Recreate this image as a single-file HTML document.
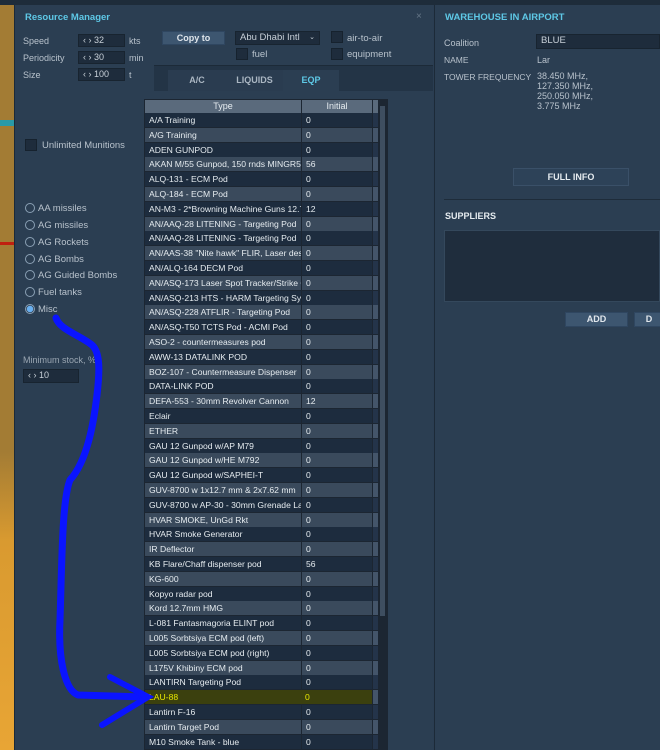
<!DOCTYPE html>
<html><head><meta charset="utf-8"><style>
*{margin:0;padding:0;box-sizing:border-box}
body{width:660px;height:750px;overflow:hidden;background:#2a3d52;font-family:"Liberation Sans","DejaVu Sans",sans-serif;font-size:9px;color:#c8d0d8;position:relative}
.abs{position:absolute}
.map{left:0;top:5px;width:14px;height:745px;background:linear-gradient(#a37c34 0,#a37c34 60%,#d99a30 72%,#e8a535 100%)}
.lp{left:14px;top:5px;width:419px;height:745px;background:#2b3e52;border-left:1px solid #1c2a38}
.rp{left:434px;top:5px;width:226px;height:745px;background:#2b3e52;border-left:1px solid #1c2a38}
.title{color:#5ec8e6;font-weight:bold;font-size:9.5px}
.lbl{color:#b8c2cc;font-size:9px}
.inp{background:#1e2c3c;border:1px solid #182430;color:#c8d0d8;font-size:9px;height:13px;line-height:11px;padding-left:4px}
.btn{background:#3d5670;border:1px solid #2f4660;color:#e0e6ec;font-weight:bold;text-align:center}
.cb{width:12px;height:12px;background:#1e2c3c;border:1px solid #16222e}
.rad{width:10px;height:10px;border-radius:50%;border:1px solid #8aa0b4}
.row{position:absolute;left:145px;width:233px;height:14.8px;font-size:8.6px;line-height:14.8px;color:#e6ecf0}
.row .t{position:absolute;left:0;width:156px;height:14px;padding-left:4px;white-space:nowrap;overflow:hidden}
.row .v{position:absolute;left:157px;width:70px;height:14px;padding-left:4px}
.row .e{position:absolute;left:228px;width:5px;height:14px}
.d .t,.d .v{background:#1d2c3e}.d .e{background:#24344a}
.l .t,.l .v{background:#3a4a5c}.l .e{background:#44556a}
</style></head><body>
<div class="abs" style="left:0;top:0;width:660px;height:5px;background:#1e2c3a"></div>
<div class="abs map"></div>
<div class="abs" style="left:0;top:120px;width:14px;height:6px;background:#2a9aa8"></div>
<div class="abs" style="left:0;top:242px;width:14px;height:3px;background:#c02010"></div>
<div class="abs lp"></div>
<div class="abs rp"></div>
<div class="abs title" style="left:25px;top:12px">Resource Manager</div>
<div class="abs" style="left:416px;top:11px;color:#667788;font-size:10px">×</div>
<div class="abs lbl" style="left:23px;top:36px">Speed</div>
<div class="abs lbl" style="left:23px;top:53px">Periodicity</div>
<div class="abs lbl" style="left:23px;top:70px">Size</div>
<div class="abs inp" style="left:78px;top:34px;width:47px">‹ › 32</div>
<div class="abs inp" style="left:78px;top:51px;width:47px">‹ › 30</div>
<div class="abs inp" style="left:78px;top:68px;width:47px">‹ › 100</div>
<div class="abs lbl" style="left:129px;top:36px">kts</div>
<div class="abs lbl" style="left:129px;top:53px">min</div>
<div class="abs lbl" style="left:129px;top:70px">t</div>
<div class="abs btn" style="left:162px;top:31px;width:63px;height:14px;line-height:12px">Copy to</div>
<div class="abs inp" style="left:235px;top:31px;width:85px;height:14px;font-size:9.5px">Abu Dhabi Intl <span style="position:absolute;right:4px;font-size:7px">⌄</span></div>
<div class="abs cb" style="left:331px;top:31px"></div><div class="abs lbl" style="left:347px;top:33px;font-size:9.5px">air-to-air</div>
<div class="abs cb" style="left:236px;top:48px"></div><div class="abs lbl" style="left:252px;top:49px;font-size:9.5px">fuel</div>
<div class="abs cb" style="left:331px;top:48px"></div><div class="abs lbl" style="left:347px;top:49px;font-size:9.5px">equipment</div>
<div class="abs" style="left:154px;top:65px;width:279px;height:26px;background:#233446;border-top:1px solid #1c2a38"></div>
<div class="abs" style="left:168px;top:70px;width:58px;height:21px;background:#2a3c50;color:#aab6c2;font-weight:bold;text-align:center;line-height:21px">A/C</div>
<div class="abs" style="left:226px;top:70px;width:57px;height:21px;background:#2a3c50;color:#aab6c2;font-weight:bold;text-align:center;line-height:21px">LIQUIDS</div>
<div class="abs" style="left:283px;top:70px;width:56px;height:22px;background:#2b3e52;color:#5ec8e6;font-weight:bold;text-align:center;line-height:21px">EQP</div>
<div class="abs cb" style="left:25px;top:139px"></div><div class="abs lbl" style="left:42px;top:140px;font-size:9.5px">Unlimited Munitions</div>
<div class="abs rad" style="left:25px;top:203px"></div><div class="abs lbl" style="left:38px;top:203px;font-size:9.5px">AA missiles</div>
<div class="abs rad" style="left:25px;top:220px"></div><div class="abs lbl" style="left:38px;top:220px;font-size:9.5px">AG missiles</div>
<div class="abs rad" style="left:25px;top:237px"></div><div class="abs lbl" style="left:38px;top:237px;font-size:9.5px">AG Rockets</div>
<div class="abs rad" style="left:25px;top:254px"></div><div class="abs lbl" style="left:38px;top:254px;font-size:9.5px">AG Bombs</div>
<div class="abs rad" style="left:25px;top:270px"></div><div class="abs lbl" style="left:38px;top:270px;font-size:9.5px">AG Guided Bombs</div>
<div class="abs rad" style="left:25px;top:287px"></div><div class="abs lbl" style="left:38px;top:287px;font-size:9.5px">Fuel tanks</div>
<div class="abs rad" style="left:25px;top:304px;background:radial-gradient(#6ab0f0 0 3px,transparent 3.5px)"></div><div class="abs lbl" style="left:38px;top:304px;font-size:9.5px">Misc</div>
<div class="abs lbl" style="left:23px;top:355px;color:#9aa6b2">Minimum stock, %</div>
<div class="abs inp" style="left:23px;top:369px;width:56px;height:14px">‹ › 10</div>
<div class="abs" style="left:144px;top:99px;width:244px;height:651px;background:#1c2632"></div>
<div class="abs" style="left:145px;top:100px;width:156px;height:13px;background:#5a6a7c;color:#e6ecf0;text-align:center;line-height:13px">Type</div>
<div class="abs" style="left:302px;top:100px;width:70px;height:13px;background:#5a6a7c;color:#e6ecf0;text-align:center;line-height:13px">Initial</div>
<div class="abs" style="left:373px;top:100px;width:5px;height:13px;background:#5a6a7c"></div>
<div class="abs" style="left:380px;top:106px;width:5px;height:510px;background:#3e4e60"></div>
<div id="rows"></div>
<svg class="abs" style="left:0;top:0" width="660" height="750">
<path d="M56,318 C60,330 80,335 92,345 C100,352 100,370 97,395 C94,420 88,460 70,480 C62,500 62,560 60,620 C58,660 65,690 78,695 L145,697" fill="none" stroke="#0a14ff" stroke-width="7" stroke-linecap="round" stroke-linejoin="round"/>
<path d="M110,677 L148,697 L102,725" fill="none" stroke="#0a14ff" stroke-width="6" stroke-linecap="round"/>
</svg>
<div class="abs title" style="left:445px;top:12px">WAREHOUSE IN AIRPORT</div>
<div class="abs lbl" style="left:444px;top:38px">Coalition</div>
<div class="abs inp" style="left:536px;top:34px;width:124px;height:15px;font-size:9.5px">BLUE</div>
<div class="abs lbl" style="left:444px;top:55px;font-size:8.5px">NAME</div>
<div class="abs lbl" style="left:537px;top:55px">Lar</div>
<div class="abs lbl" style="left:444px;top:72px;font-size:8.5px">TOWER FREQUENCY</div>
<div class="abs lbl" style="left:537px;top:71px;line-height:10px">38.450 MHz,<br>127.350 MHz,<br>250.050 MHz,<br>3.775 MHz</div>
<div class="abs" style="left:513px;top:168px;width:116px;height:18px;border:1px solid #3a5068;background:#2d4258;color:#e6ecf0;font-weight:bold;text-align:center;line-height:16px">FULL INFO</div>
<div class="abs" style="left:444px;top:199px;width:216px;height:1px;background:#1e2c3a"></div>
<div class="abs" style="left:445px;top:211px;color:#e6ecf0;font-weight:bold">SUPPLIERS</div>
<div class="abs" style="left:444px;top:230px;width:216px;height:72px;background:#1f2d3d;border:1px solid #34485c"></div>
<div class="abs btn" style="left:565px;top:312px;width:63px;height:15px;line-height:13px">ADD</div>
<div class="abs btn" style="left:634px;top:312px;width:30px;height:15px;line-height:13px">D</div>
<script>
var r=[["A/A Training",0],["A/G Training",0],["ADEN GUNPOD",0],["AKAN M/55 Gunpod, 150 rnds MINGR55-HE",56],["ALQ-131 - ECM Pod",0],["ALQ-184 - ECM Pod",0],["AN-M3 - 2*Browning Machine Guns 12.7mm",12],["AN/AAQ-28 LITENING - Targeting Pod",0],["AN/AAQ-28 LITENING - Targeting Pod",0],["AN/AAS-38 \"Nite hawk\" FLIR, Laser designator",0],["AN/ALQ-164 DECM Pod",0],["AN/ASQ-173 Laser Spot Tracker/Strike CAM",0],["AN/ASQ-213 HTS - HARM Targeting System",0],["AN/ASQ-228 ATFLIR - Targeting Pod",0],["AN/ASQ-T50 TCTS Pod - ACMI Pod",0],["ASO-2 - countermeasures pod",0],["AWW-13 DATALINK POD",0],["BOZ-107 - Countermeasure Dispenser",0],["DATA-LINK POD",0],["DEFA-553 - 30mm Revolver Cannon",12],["Eclair",0],["ETHER",0],["GAU 12 Gunpod w/AP M79",0],["GAU 12 Gunpod w/HE M792",0],["GAU 12 Gunpod w/SAPHEI-T",0],["GUV-8700 w 1x12.7 mm & 2x7.62 mm",0],["GUV-8700 w AP-30 - 30mm Grenade Launcher",0],["HVAR SMOKE, UnGd Rkt",0],["HVAR Smoke Generator",0],["IR Deflector",0],["KB Flare/Chaff dispenser pod",56],["KG-600",0],["Kopyo radar pod",0],["Kord 12.7mm HMG",0],["L-081 Fantasmagoria ELINT pod",0],["L005 Sorbtsiya ECM pod (left)",0],["L005 Sorbtsiya ECM pod (right)",0],["L175V Khibiny ECM pod",0],["LANTIRN Targeting Pod",0],["LAU-88",0],["Lantirn F-16",0],["Lantirn Target Pod",0],["M10 Smoke Tank - blue",0]];
var h="";r.forEach(function(x,i){var y=113+i*14.8;var hl=x[0]=="LAU-88";
h+='<div class="row '+(i%2?'l':'d')+'" style="top:'+y+'px'+(hl?';color:#e8e800':'')+'"><div class="t"'+(hl?' style="background:#3b400e"':'')+'>'+x[0].replace(/&/g,'&amp;')+'</div><div class="v"'+(hl?' style="background:#3b400e"':'')+'>'+x[1]+'</div><div class="e"></div></div>';});
document.getElementById("rows").innerHTML=h;
</script>
<div class="abs" style="left:300px;top:690px;width:42px;height:14px;background:#3b400e"></div>
<div class="abs" style="left:305px;top:690px;color:#e8e800;font-size:8.6px;line-height:14.8px">0</div>
</body></html>
